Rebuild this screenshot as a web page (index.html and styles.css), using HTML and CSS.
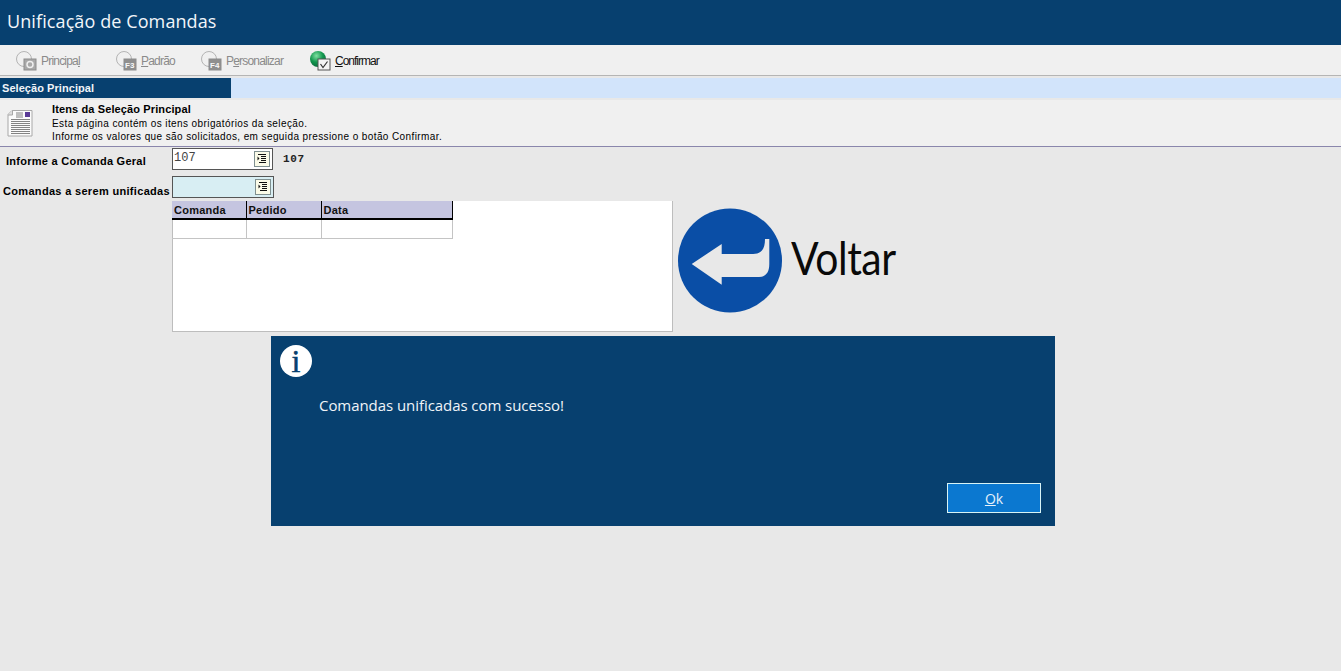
FILE: index.html
```html
<!DOCTYPE html>
<html lang="pt-BR">
<head>
    <meta charset="UTF-8">
    <title>Unificação de Comandas</title>
    <link rel="stylesheet" href="styles.css">
</head>
<body>
    <div class="header">Unificação de Comandas</div>

    <div class="toolbar">
        <div class="tool tool-principal">
            <svg class="tool-icon" width="22" height="20" viewBox="0 0 22 20"><circle cx="9" cy="8" r="7.500" fill="none" stroke="#b4b4b4"/><rect x="9" y="8" width="12" height="11" fill="#a8a8a8" stroke="#8c8c8c"/><circle cx="15" cy="13.500" r="3" fill="none" stroke="#eeeeee" stroke-width="1.500"/></svg>
            <span>Principa<u>l</u></span>
        </div>
        <div class="tool tool-padrao">
            <svg class="tool-icon" width="22" height="20" viewBox="0 0 22 20"><circle cx="9" cy="8" r="7.500" fill="none" stroke="#b4b4b4"/><rect x="9" y="8" width="12" height="11" fill="#8f8f8f" stroke="#8c8c8c"/><text x="10" y="17" class="key-text">F3</text></svg>
            <span><u>P</u>adrão</span>
        </div>
        <div class="tool tool-personalizar">
            <svg class="tool-icon" width="22" height="20" viewBox="0 0 22 20"><circle cx="9" cy="8" r="7.500" fill="none" stroke="#b4b4b4"/><rect x="9" y="8" width="12" height="11" fill="#8f8f8f" stroke="#8c8c8c"/><text x="10" y="17" class="key-text">F4</text></svg>
            <span>P<u>e</u>rsonalizar</span>
        </div>
        <div class="tool tool-confirmar">
            <svg class="tool-icon" width="22" height="20" viewBox="0 0 22 20">
                <defs><radialGradient id="globe" cx="0.4" cy="0.3" r="0.8"><stop offset="0" stop-color="#7fe0a0"/><stop offset="0.5" stop-color="#12964e"/><stop offset="1" stop-color="#0b5f38"/></radialGradient></defs>
                <circle cx="9" cy="8" r="8" fill="url(#globe)"/>
                <rect x="9" y="8" width="12" height="11" fill="#f4f4f4" stroke="#555555"/>
                <path d="M11.500 13l2.500 3.500 4.500-6" fill="none" stroke="#333333" stroke-width="1.200"/>
            </svg>
            <span><u>C</u>onfirmar</span>
        </div>
    </div>

    <div class="section-bar">
        <div class="section-tab">Seleção Principal</div>
    </div>

    <div class="info">
        <svg class="info-icon" width="28" height="28" viewBox="0 0 28 28">
            <path d="M6 1.500h20v25.500h-24v-21.500z" fill="#fbfbfb" stroke="#a8a8a8"/>
            <path d="M2 6h4.500v-4.500" fill="#dddddd" stroke="#a8a8a8"/>
            <rect x="19" y="3" width="5" height="5" fill="#5a3a96"/>
            <path d="M10 4h7M10 6h7M10 8h7M5 10.500h19M5 12.500h19M5 14.500h19M5 16.500h19M5 18.500h19M5 20.500h19M5 22.500h19M5 24.500h19" stroke="#666666" stroke-width="0.800"/>
        </svg>
        <div class="info-text">
            <b>Itens da Seleção Principal</b>
            <div>Esta página contém os itens obrigatórios da seleção.</div>
            <div>Informe os valores que são solicitados, em seguida pressione o botão Confirmar.</div>
        </div>
    </div>

    <div class="form">
        <div class="row row-geral">
            <label class="label">Informe a Comanda Geral</label>
            <div class="field">
                <span class="field-value">107</span>
                <svg class="lookup" width="16" height="16" viewBox="0 0 16 16"><use href="#lookup-icon"/></svg>
            </div>
            <span class="field-desc">107</span>
        </div>
        <div class="row row-unificadas">
            <label class="label">Comandas a serem unificadas</label>
            <div class="field field-required">
                <svg class="lookup" width="16" height="16" viewBox="0 0 16 16">
                    <g id="lookup-icon">
                        <rect x="0.500" y="0.500" width="15" height="15" fill="#fbfbe8" stroke="#7f8f8f"/>
                        <path d="M4 3.500h8M7 5.500h5M7 7.500h5M7 9.500h5M5 11.500h7" stroke="#111111"/>
                        <path d="M3.500 5.500l2 2-2 2z" fill="#111111"/>
                    </g>
                </svg>
            </div>
        </div>
        <div class="row row-table">
            <div class="table-box">
                <table class="grid">
                    <thead>
                        <tr><th class="col-comanda">Comanda</th><th class="col-pedido">Pedido</th><th class="col-data">Data</th></tr>
                    </thead>
                    <tbody>
                        <tr><td></td><td></td><td></td></tr>
                    </tbody>
                </table>
            </div>
            <div class="voltar">
                <svg width="106" height="106" viewBox="0 0 106 106">
                    <circle cx="53" cy="52.500" r="52" fill="#0a4ea6"/>
                    <path d="M14.700 56 L44.700 36 V46 H74 C82 46 88 44 88 31 H92.300 V56 C92.300 64 89 69 82 69 H44.700 V76.700 Z" fill="#e8e8e8"/>
                </svg>
                <span class="voltar-text">Voltar</span>
            </div>
        </div>
    </div>

    <div class="dialog">
        <div class="dialog-icon">i</div>
        <div class="dialog-msg">Comandas unificadas com sucesso!</div>
        <div class="dialog-actions">
            <button class="btn-ok" type="button"><u>O</u>k</button>
        </div>
    </div>
</body>
</html>
```

FILE: styles.css
```css
html, body {
    height: 100%;
}
body {
    margin: 0;
    background: #e8e8e8;
    font-family: "Liberation Sans", Arial, sans-serif;
    font-size: 11px;
    color: black;
    overflow: hidden;
}
.header {
    height: 45px;
    box-sizing: border-box;
    padding: 9px 0 0 7px;
    background: #07406f;
    color: #f2f6fa;
    font-family: "Open Sans", sans-serif;
    font-size: 18px;
    letter-spacing: 0.1px;
    line-height: 25px;
}
.toolbar {
    display: flex;
    height: 31px;
    box-sizing: border-box;
    background: #f0f0f0;
    border-bottom: 1px solid #b5b5b5;
    padding-top: 6px;
    font-size: 12px;
    color: #8a8a8a;
}
.tool {
    display: flex;
    align-items: flex-start;
    gap: 4px;
    line-height: 20px;
    letter-spacing: -0.8px;
}
.tool-principal {
    margin-left: 15px;
    width: 100px;
}
.tool-padrao {
    width: 85px;
}
.tool-personalizar {
    width: 109px;
}
.tool-confirmar {
    color: #111;
    letter-spacing: -1px;
}
.key-text {
    font-family: "Liberation Sans", sans-serif;
    font-size: 8px;
    font-weight: bold;
    letter-spacing: 0;
    fill: #f8f8f8;
}
.section-bar {
    margin-top: 2px;
    height: 20px;
    background: #d2e4fb;
}
.section-tab {
    width: 229px;
    height: 20px;
    padding-left: 2px;
    background: #07406f;
    color: #f0f4f8;
    font-weight: bold;
    font-size: 11px;
    letter-spacing: 0.06px;
    line-height: 21px;
}
.info {
    display: flex;
    height: 47px;
    margin-top: 2px;
    box-sizing: border-box;
    background: #f0f0f0;
    border-bottom: 1px solid #8a86ac;
    padding-left: 6px;
    font-size: 10px;
    line-height: 13.500px;
}
.info-icon {
    margin: 9px 18px 0 0;
}
.info-text {
    padding-top: 3px;
    letter-spacing: 0.4px;
}
.info-text b {
    font-size: 11px;
    letter-spacing: 0.12px;
}
.form {
    padding-top: 1px;
}
.row {
    display: flex;
}
.label {
    width: 172px;
    box-sizing: border-box;
    font-weight: bold;
}
.row-geral {
    height: 28px;
}
.row-geral .label {
    padding: 7px 0 0 6px;
    letter-spacing: 0.27px;
}
.row-unificadas {
    height: 25px;
}
.row-unificadas .label {
    padding: 9px 0 0 3px;
    letter-spacing: 0.32px;
    white-space: nowrap;
}
.field {
    display: flex;
    justify-content: flex-end;
    align-items: center;
    width: 101px;
    height: 22px;
    box-sizing: border-box;
    border: 1px solid #555;
    background: white;
    padding-right: 2px;
    font-family: "Liberation Mono", monospace;
}
.field-value {
    flex: 1;
    padding: 0 0 2px 1px;
    font-size: 12px;
    color: #444;
}
.field-required {
    width: 102px;
    background: #d8eef3;
}
.lookup {
    display: block;
}
.field-desc {
    margin: 5px 0 0 10px;
    font-family: "Liberation Mono", monospace;
    font-size: 11px;
    font-weight: bold;
    letter-spacing: 0.6px;
    color: #222;
}
.row-table {
    padding-left: 172px;
}
.table-box {
    width: 501px;
    height: 131px;
    box-sizing: border-box;
    background: white;
    border: 1px solid #bdbdbd;
    border-top: 0;
}
.grid {
    border-collapse: collapse;
    table-layout: fixed;
    width: 281px;
    margin-left: -1px;
}
.grid th {
    height: 18px;
    padding: 0 0 0 2px;
    text-align: left;
    font-size: 11px;
    letter-spacing: 0.25px;
    background: #c5c5e0;
    color: #111;
    border-right: 1px solid black;
    border-bottom: 2px solid black;
    box-sizing: border-box;
}
.grid td {
    height: 18px;
    padding: 0;
    border-right: 1px solid #c4c4c4;
    border-bottom: 1px solid #c4c4c4;
}
.col-comanda {
    width: 74px;
}
.col-pedido {
    width: 75px;
}
.voltar {
    display: flex;
    align-items: flex-start;
    margin: 7px 0 0 4px;
}
.voltar-text {
    margin: 19px 0 0 8px;
    font-family: "Lato", sans-serif;
    font-size: 47px;
    line-height: 60px;
    letter-spacing: -0.5px;
    color: #0a0a0a;
    transform: scaleX(0.87);
    transform-origin: left;
}
.dialog {
    position: absolute;
    left: 271px;
    top: 336px;
    width: 784px;
    height: 190px;
    box-sizing: border-box;
    padding: 9px 14px 13px 9px;
    display: flex;
    flex-direction: column;
    background: #07406f;
    color: #f0f4f8;
    font-family: "Open Sans", sans-serif;
}
.dialog-icon {
    width: 32px;
    height: 32px;
    border-radius: 50%;
    background: white;
    color: #07406f;
    text-align: center;
    font-family: "Liberation Serif", serif;
    font-size: 32px;
    -webkit-text-stroke: 0.5px #07406f;
    line-height: 32px;
}
.dialog-msg {
    margin: 18px 0 0 39px;
    font-size: 15px;
    letter-spacing: -0.06px;
    line-height: 20px;
}
.dialog-actions {
    margin-top: auto;
    display: flex;
    justify-content: flex-end;
}
.btn-ok {
    width: 94px;
    height: 30px;
    padding: 0;
    background: #0b78d0;
    border: 1px solid #d8f4f6;
    color: #e6f2fb;
    font-family: "Open Sans", sans-serif;
    font-size: 14px;
}
```
